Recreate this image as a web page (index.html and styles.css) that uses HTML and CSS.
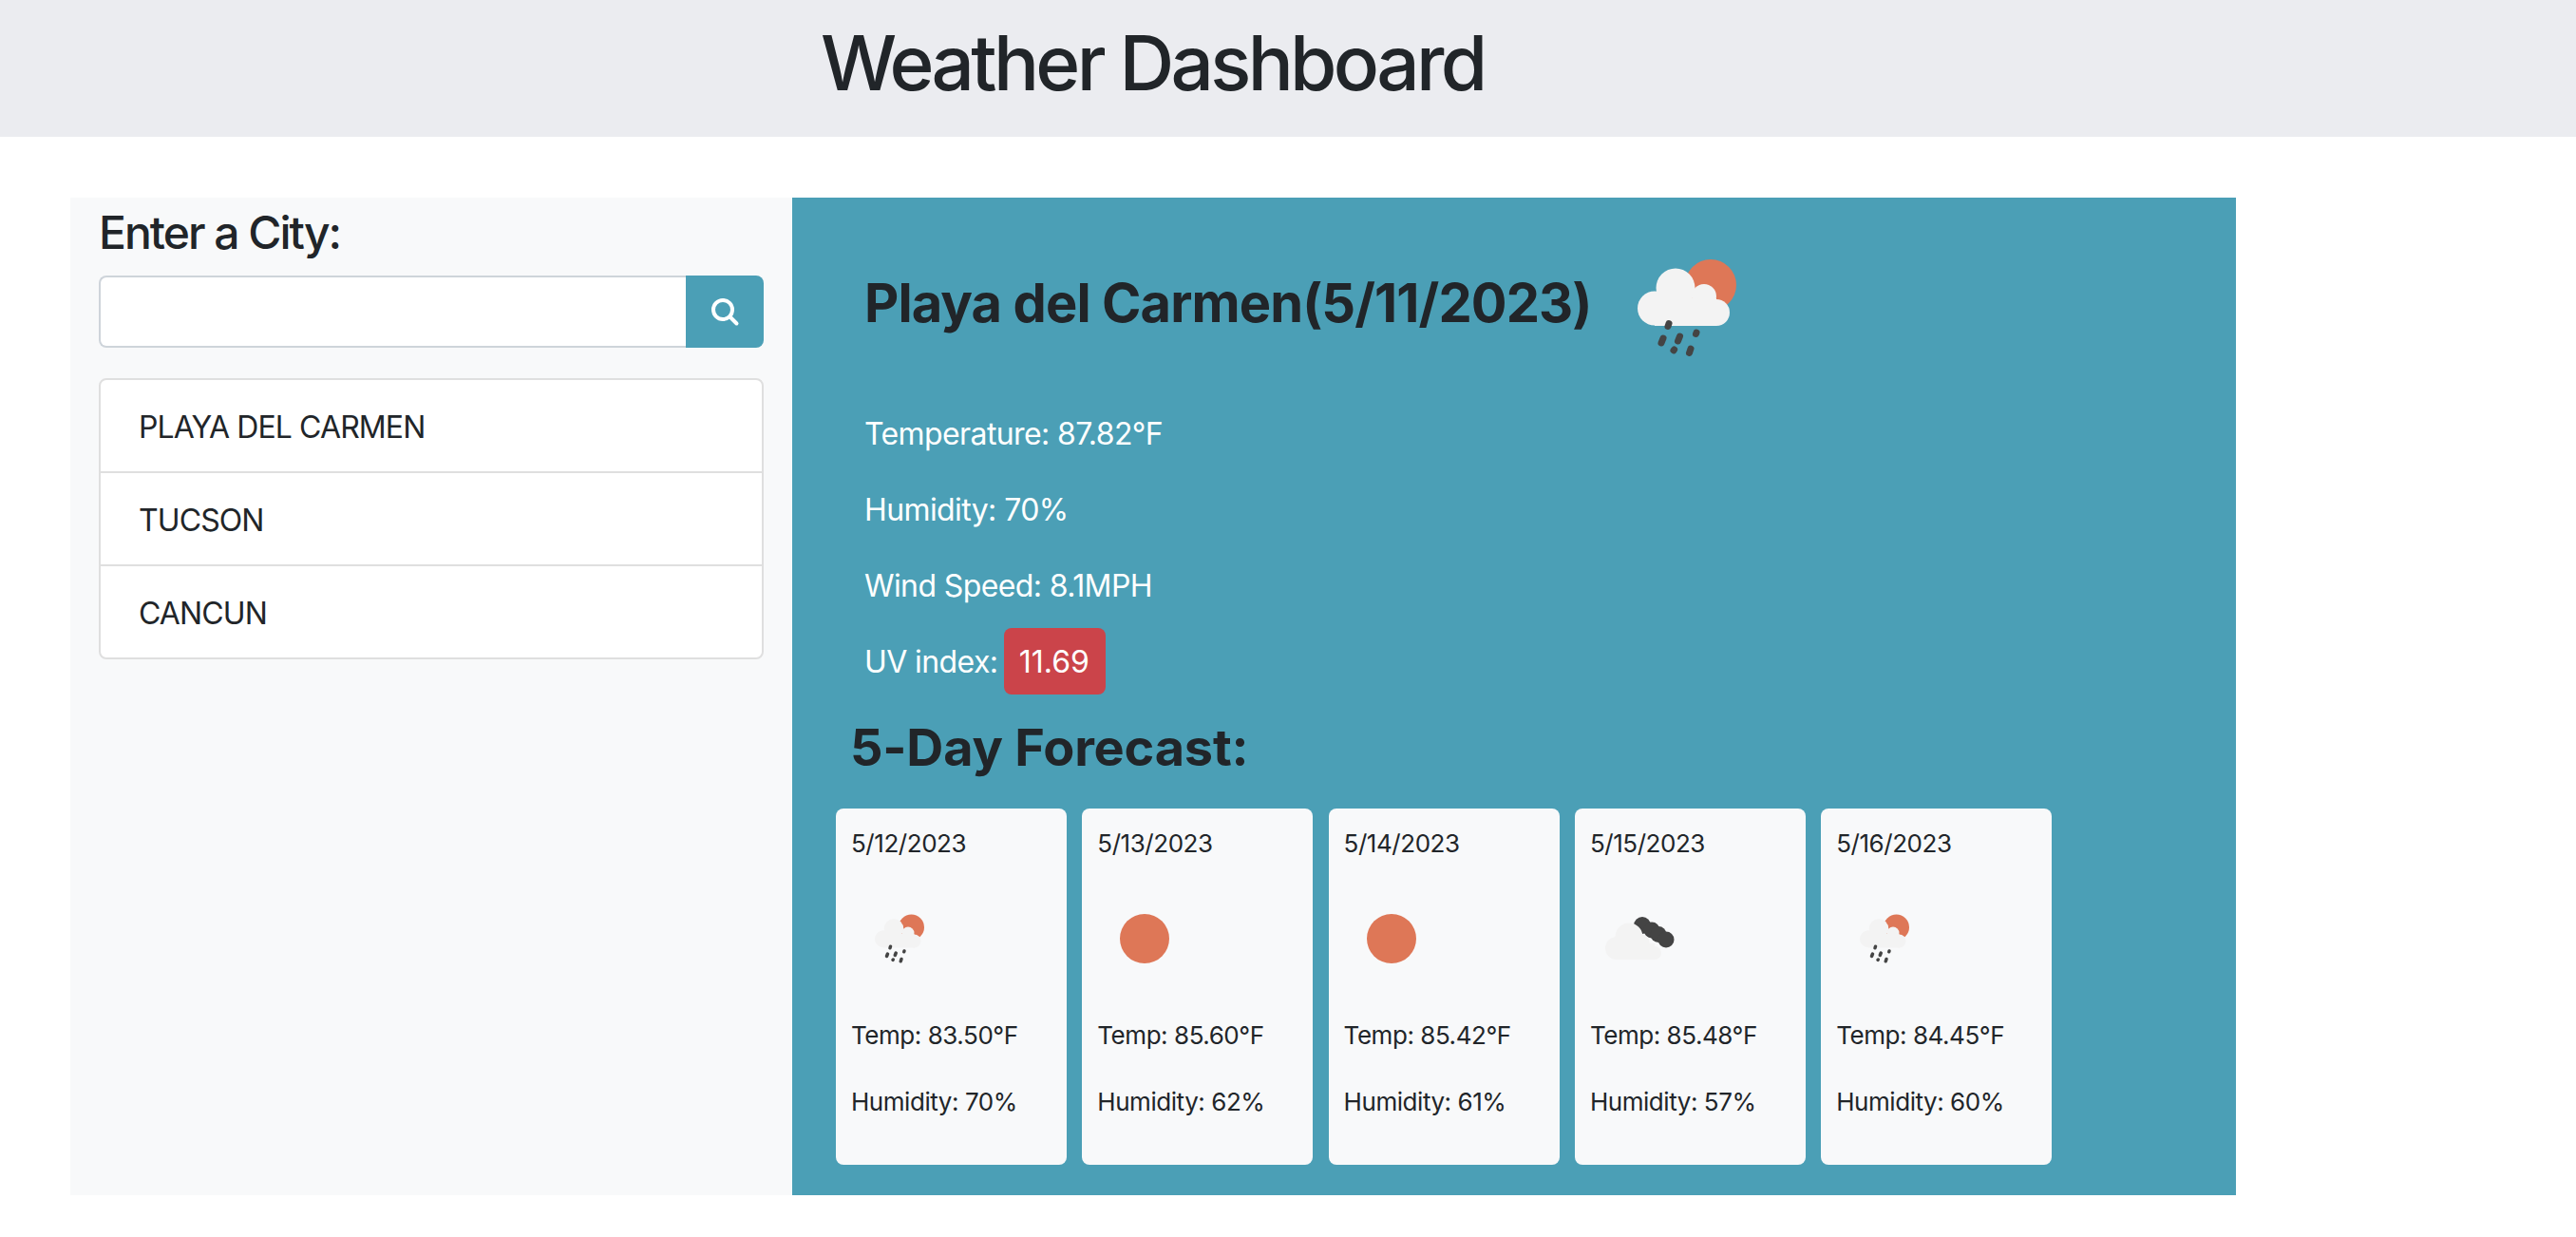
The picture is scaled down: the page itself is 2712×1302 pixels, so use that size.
FILE: index.html
```html
<!DOCTYPE html>
<html lang="en">
<head>
  <meta charset="UTF-8" />
  <meta name="viewport" content="width=device-width, initial-scale=1.0"/>
  <title>Weather Dashboard</title>
  <link rel="stylesheet" href="styles.css">
</head>
<body>
  <svg class="defs" width="0" height="0" aria-hidden="true">
    <symbol id="icon-rain" viewBox="0 0 200 200">
      <circle cx="127" cy="76" r="27" fill="#de7757"/>
      <g fill="#f3f3f3">
        <circle cx="68" cy="100.5" r="18"/>
        <circle cx="90" cy="79" r="20.5"/>
        <circle cx="120" cy="88" r="13"/>
        <circle cx="133" cy="105" r="14"/>
        <rect x="68" y="90" width="65" height="29"/>
      </g>
      <g stroke="#444" stroke-width="7" stroke-linecap="round">
        <path d="M83 116.5 L82 119.5"/>
        <path d="M77 132 L75 137"/>
        <path d="M94.5 130 L92.5 135"/>
        <path d="M112 126 L111.5 127.5"/>
        <path d="M88.6 144 L88 144.8"/>
        <path d="M106 143 L104.5 147.5"/>
      </g>
    </symbol>
    <symbol id="icon-sun" viewBox="0 0 200 200">
      <circle cx="100" cy="100" r="52" fill="#de7757"/>
    </symbol>
    <symbol id="icon-clouds" viewBox="0 0 100 100">
      <g fill="#444">
        <circle cx="55" cy="36" r="9"/>
        <circle cx="65" cy="41" r="8.5"/>
        <circle cx="72" cy="45.5" r="8.5"/>
        <circle cx="80" cy="51" r="8.5"/>
      </g>
      <g fill="#f3f3f3">
        <circle cx="28" cy="60" r="12"/>
        <circle cx="41" cy="48" r="14.5"/>
        <circle cx="54" cy="54" r="8.5"/>
        <circle cx="62" cy="62" r="7.5"/>
        <circle cx="68" cy="65" r="7"/>
        <rect x="28" y="55" width="40" height="17"/>
      </g>
    </symbol>
  </svg>

  <header class="page-header">
    <h1>Weather Dashboard</h1>
  </header>

  <div class="layout">
    <aside class="sidebar">
      <h3>Enter a City:</h3>
      <form class="search">
        <input type="text" aria-label="City" />
        <button type="button" aria-label="Search">
          <svg width="32" height="32" viewBox="0 0 32 32" fill="none" stroke="#fff" stroke-linecap="round">
            <circle cx="14" cy="14" r="10" stroke-width="4"/>
            <path d="M22 22 L28.5 28.5" stroke-width="4"/>
          </svg>
        </button>
      </form>
      <ul class="city-list">
        <li>PLAYA DEL CARMEN</li>
        <li>TUCSON</li>
        <li>CANCUN</li>
      </ul>
    </aside>

    <main class="content">
      <div class="today">
        <h2>Playa del Carmen(5/11/2023)</h2>
        <svg class="icon-big"><use href="#icon-rain"/></svg>
      </div>
      <div class="stats">
        <p>Temperature: 87.82°F</p>
        <p>Humidity: 70%</p>
        <p>Wind Speed: 8.1MPH</p>
        <p>UV index: <span class="badge">11.69</span></p>
      </div>

      <h2 class="forecast-title">5-Day Forecast:</h2>
      <div class="forecast">
        <div class="card">
          <p>5/12/2023</p>
          <svg class="icon-small"><use href="#icon-rain"/></svg>
          <p>Temp: 83.50°F</p>
          <p>Humidity: 70%</p>
        </div>
        <div class="card">
          <p>5/13/2023</p>
          <svg class="icon-small"><use href="#icon-sun"/></svg>
          <p>Temp: 85.60°F</p>
          <p>Humidity: 62%</p>
        </div>
        <div class="card">
          <p>5/14/2023</p>
          <svg class="icon-small"><use href="#icon-sun"/></svg>
          <p>Temp: 85.42°F</p>
          <p>Humidity: 61%</p>
        </div>
        <div class="card">
          <p>5/15/2023</p>
          <svg class="icon-small"><use href="#icon-clouds"/></svg>
          <p>Temp: 85.48°F</p>
          <p>Humidity: 57%</p>
        </div>
        <div class="card">
          <p>5/16/2023</p>
          <svg class="icon-small"><use href="#icon-rain"/></svg>
          <p>Temp: 84.45°F</p>
          <p>Humidity: 60%</p>
        </div>
      </div>
    </main>
  </div>
</body>
</html>
```

FILE: styles.css
```css
* {
  box-sizing: border-box;
}
body {
  margin: 0;
  background: #fff;
  color: #212529;
  font-family: Inter, "Liberation Sans", sans-serif;
  font-size: 32px;
  line-height: 48px;
}
.defs {
  position: absolute;
}
.page-header {
  height: 144px;
  background: #ebecf0;
  padding: 26px 0 0 864px;
}
.page-header h1 {
  margin: 0;
  font-size: 80px;
  line-height: 80px;
  font-weight: 500;
  letter-spacing: -3.7px;
}
.layout {
  display: grid;
  grid-template-columns: 760px 1520px;
  height: 1050px;
  margin: 64px 0 0 74px;
}
.sidebar {
  background: #f8f9fa;
  padding: 8px 30px 0 30px;
}
.sidebar h3 {
  margin: 0 0 16px;
  font-size: 48px;
  line-height: 58px;
  font-weight: 500;
  letter-spacing: -2px;
}
.search {
  display: flex;
  height: 76px;
  margin-bottom: 32px;
}
.search input {
  flex: 1;
  min-width: 0;
  background: #fff;
  border: 2px solid #ced4da;
  border-right: 0;
  border-radius: 8px 0 0 8px;
}
.search button {
  display: flex;
  align-items: center;
  justify-content: center;
  width: 82px;
  padding: 0;
  border: 0;
  background: #4b9fb6;
  border-radius: 0 8px 8px 0;
}
.city-list {
  margin: 0;
  padding: 0;
  list-style: none;
  background: #fff;
  border: 2px solid #dfdfdf;
  border-radius: 8px;
  letter-spacing: -0.9px;
}
.city-list li {
  height: 96px;
  padding: 26px 40px 0;
}
.city-list li + li {
  border-top: 2px solid #dfdfdf;
  height: 98px;
  padding-top: 26px;
}
.content {
  background: #4b9fb6;
  padding-top: 16px;
}
.today {
  display: flex;
  align-items: center;
  height: 200px;
  padding-left: 76px;
}
.today h2 {
  margin: 0 0 10px;
  font-size: 56px;
  line-height: 67px;
  font-weight: 700;
  letter-spacing: -0.9px;
}
.icon-big {
  width: 200px;
  height: 200px;
  margin-left: -1px;
}
.stats {
  margin-top: 9px;
  padding-left: 76px;
  color: #fff;
  letter-spacing: -0.6px;
}
.stats p {
  margin: 0 0 32px;
}
.badge {
  background: #cb444a;
  border-radius: 8px;
  padding: 16px 17px 15px 16px;
  margin-left: -2px;
  letter-spacing: 0;
}
.forecast-title {
  margin: 35px 0 33px 61px;
  font-size: 54px;
  line-height: 62px;
  font-weight: 700;
  letter-spacing: -0.2px;
}
.forecast {
  display: flex;
  gap: 16.3px;
  margin-left: 46px;
}
.card {
  width: 243px;
  height: 375px;
  padding: 17px 16px 0;
  background: #f8f9fa;
  border-radius: 8px;
  font-size: 26px;
  line-height: 40px;
  letter-spacing: -0.45px;
}
.card p {
  margin: 0 0 30px;
}
.icon-small {
  display: block;
  width: 100px;
  height: 100px;
  margin: 30px 0 32px;
}
.card p:first-child {
  margin-bottom: 0;
}
```
